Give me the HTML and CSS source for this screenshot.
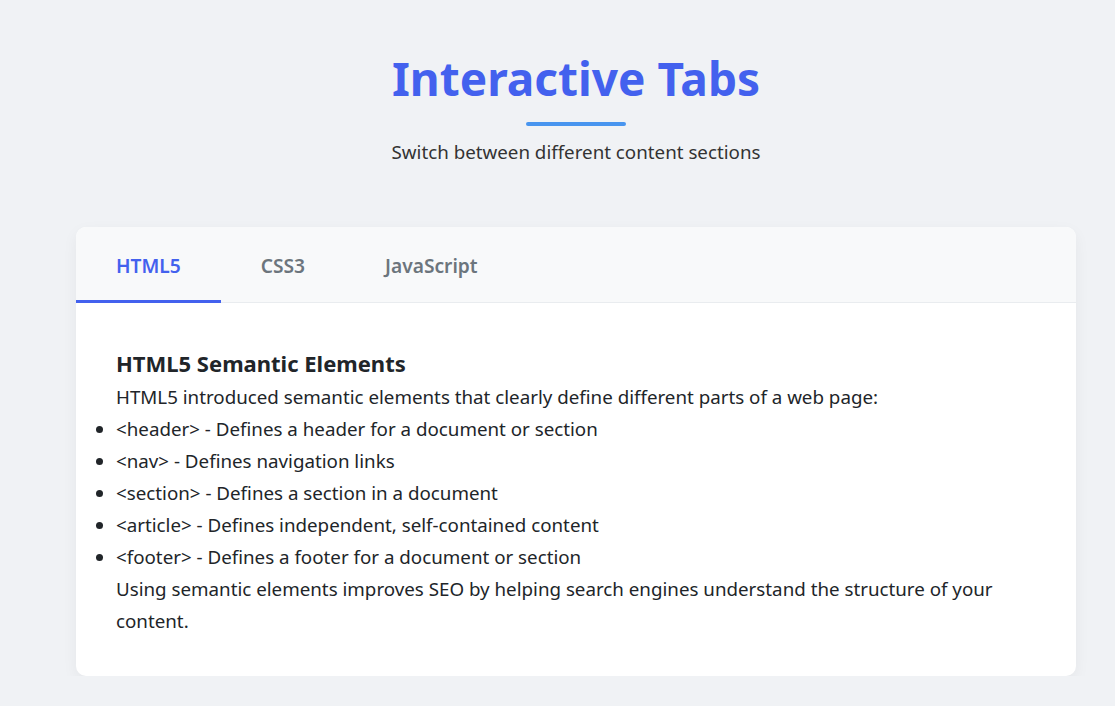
FILE: index.html
```html
<!DOCTYPE html>
<html lang="en">
<head>
<meta charset="utf-8">
<title>Interactive Tabs</title>
<link rel="stylesheet" href="styles.css">
</head>
<body>
<div class="container">
  <header class="page-header">
    <h1 class="title">Interactive Tabs</h1>
    <div class="title-bar"></div>
    <p class="subtitle">Switch between different content sections</p>
  </header>
  <div class="card">
    <div class="tabs">
      <button class="tab active">HTML5</button>
      <button class="tab">CSS3</button>
      <button class="tab">JavaScript</button>
    </div>
    <div class="panel">
      <h3 class="panel-title">HTML5 Semantic Elements</h3>
      <p class="text">HTML5 introduced semantic elements that clearly define different parts of a web page:</p>
      <ul class="list">
        <li>&lt;header&gt; - Defines a header for a document or section</li>
        <li>&lt;nav&gt; - Defines navigation links</li>
        <li>&lt;section&gt; - Defines a section in a document</li>
        <li>&lt;article&gt; - Defines independent, self-contained content</li>
        <li>&lt;footer&gt; - Defines a footer for a document or section</li>
      </ul>
      <p class="text">Using semantic elements improves SEO by helping search engines understand the structure of your content.</p>
    </div>
  </div>
</div>
</body>
</html>
```
FILE: styles.css
```css
* { box-sizing: border-box; }
html, body { margin: 0; padding: 0; }
body {
  background: #f0f2f5;
  font-family: "Noto Sans", "Open Sans", sans-serif;
  color: #212529;
  padding-left: 37px;
}
.container {
  width: 1000px;
  margin: 0 auto;
  padding-top: 44px;
}
.page-header {
  display: flex;
  flex-direction: column;
  align-items: center;
  margin-bottom: 61px;
}
.title {
  margin: 0;
  font-size: 46px;
  line-height: 68px;
  font-weight: 700;
  color: #4361ee;
}
.title-bar {
  width: 100px;
  height: 4px;
  border-radius: 2px;
  background: #4895ef;
  margin-top: 10px;
}
.subtitle {
  margin: 12px 0 0;
  font-size: 18.75px;
  line-height: 28px;
  color: #333;
}
.card {
  background: #fff;
  border-radius: 10px;
  box-shadow: 0 5px 15px rgba(0,0,0,0.05);
  overflow: hidden;
}
.tabs {
  display: flex;
  background: #f8f9fa;
  border-bottom: 1px solid #e9ecef;
}
.tab {
  font-family: inherit;
  font-size: 19.2px;
  font-weight: 600;
  color: #6c757d;
  background: none;
  border: none;
  padding: 4px 40px 0;
  height: 76px;
  border-bottom: 3px solid transparent;
  margin-bottom: -1px;
}
.tab.active {
  color: #4361ee;
  border-bottom-color: #4361ee;
}
.panel {
  padding: 42px 40px 39px;
  font-size: 18.75px;
  line-height: 32px;
}
.panel-title {
  margin: 0;
  font-size: 22px;
  line-height: 36px;
  font-weight: 700;
  color: #212529;
}
.text { margin: 0; }
.list {
  margin: 0;
  padding: 0;
}
```
